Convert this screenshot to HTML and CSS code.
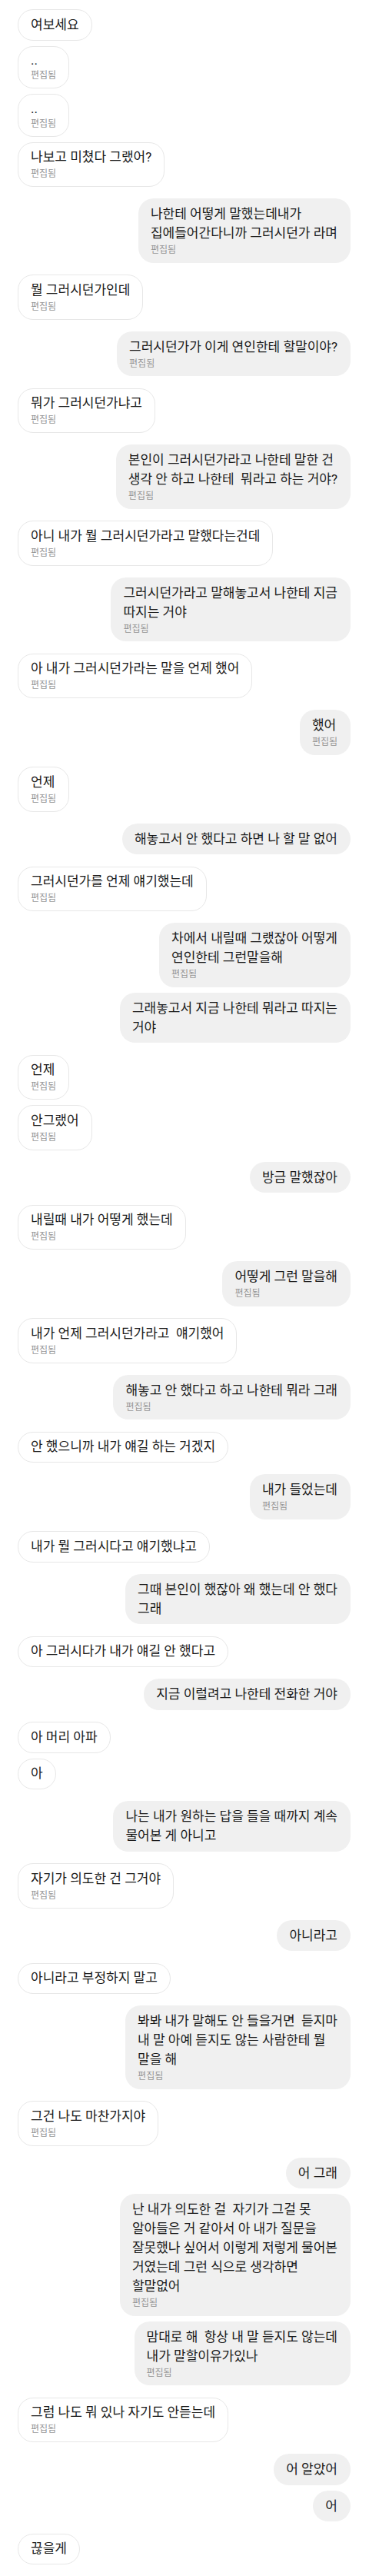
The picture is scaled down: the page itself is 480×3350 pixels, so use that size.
FILE: index.html
```html
<!DOCTYPE html>
<html lang="ko">
<head>
<meta charset="utf-8">
<title>채팅</title>
<link rel="stylesheet" href="styles.css">
</head>
<body>
<main class="chat">
  <div class="msg in"><p class="text">여보세요</p></div>
  <div class="msg in"><p class="text latin">..</p><p class="edited">편집됨</p></div>
  <div class="msg in"><p class="text latin">..</p><p class="edited">편집됨</p></div>
  <div class="msg in"><p class="text">나보고 미쳤다 그랬어?</p><p class="edited">편집됨</p></div>
  <div class="msg out"><p class="text">나한테 어떻게 말했는데내가<br>집에들어간다니까 그러시던가 라며</p><p class="edited">편집됨</p></div>
  <div class="msg in"><p class="text">뭘 그러시던가인데</p><p class="edited">편집됨</p></div>
  <div class="msg out"><p class="text">그러시던가가 이게 연인한테 할말이야?</p><p class="edited">편집됨</p></div>
  <div class="msg in"><p class="text">뭐가 그러시던가냐고</p><p class="edited">편집됨</p></div>
  <div class="msg out"><p class="text">본인이 그러시던가라고 나한테 말한 건<br>생각 안 하고 나한테&nbsp; 뭐라고 하는 거야?</p><p class="edited">편집됨</p></div>
  <div class="msg in"><p class="text">아니 내가 뭘 그러시던가라고 말했다는건데</p><p class="edited">편집됨</p></div>
  <div class="msg out"><p class="text">그러시던가라고 말해놓고서 나한테 지금<br>따지는 거야</p><p class="edited">편집됨</p></div>
  <div class="msg in"><p class="text">아 내가 그러시던가라는 말을 언제 했어</p><p class="edited">편집됨</p></div>
  <div class="msg out"><p class="text">했어</p><p class="edited">편집됨</p></div>
  <div class="msg in"><p class="text">언제</p><p class="edited">편집됨</p></div>
  <div class="msg out"><p class="text">해놓고서 안 했다고 하면 나 할 말 없어</p></div>
  <div class="msg in"><p class="text">그러시던가를 언제 얘기했는데</p><p class="edited">편집됨</p></div>
  <div class="msg out"><p class="text">차에서 내릴때 그랬잖아 어떻게<br>연인한테 그런말을해</p><p class="edited">편집됨</p></div>
  <div class="msg out"><p class="text">그래놓고서 지금 나한테 뭐라고 따지는<br>거야</p></div>
  <div class="msg in"><p class="text">언제</p><p class="edited">편집됨</p></div>
  <div class="msg in"><p class="text">안그랬어</p><p class="edited">편집됨</p></div>
  <div class="msg out"><p class="text">방금 말했잖아</p></div>
  <div class="msg in"><p class="text">내릴때 내가 어떻게 했는데</p><p class="edited">편집됨</p></div>
  <div class="msg out"><p class="text">어떻게 그런 말을해</p><p class="edited">편집됨</p></div>
  <div class="msg in"><p class="text">내가 언제 그러시던가라고&nbsp; 얘기했어</p><p class="edited">편집됨</p></div>
  <div class="msg out"><p class="text">해놓고 안 했다고 하고 나한테 뭐라 그래</p><p class="edited">편집됨</p></div>
  <div class="msg in"><p class="text">안 했으니까 내가 얘길 하는 거겠지</p></div>
  <div class="msg out"><p class="text">내가 들었는데</p><p class="edited">편집됨</p></div>
  <div class="msg in"><p class="text">내가 뭘 그러시다고 얘기했냐고</p></div>
  <div class="msg out"><p class="text">그때 본인이 했잖아 왜 했는데 안 했다<br>그래</p></div>
  <div class="msg in"><p class="text">아 그러시다가 내가 얘길 안 했다고</p></div>
  <div class="msg out"><p class="text">지금 이럴려고 나한테 전화한 거야</p></div>
  <div class="msg in"><p class="text">아 머리 아파</p></div>
  <div class="msg in"><p class="text">아</p></div>
  <div class="msg out"><p class="text">나는 내가 원하는 답을 들을 때까지 계속<br>물어본 게 아니고</p></div>
  <div class="msg in"><p class="text">자기가 의도한 건 그거야</p><p class="edited">편집됨</p></div>
  <div class="msg out"><p class="text">아니라고</p></div>
  <div class="msg in"><p class="text">아니라고 부정하지 말고</p></div>
  <div class="msg out"><p class="text">봐봐 내가 말해도 안 들을거면&nbsp; 듣지마<br>내 말 아예 듣지도 않는 사람한테 뭘<br>말을 해</p><p class="edited">편집됨</p></div>
  <div class="msg in"><p class="text">그건 나도 마찬가지야</p><p class="edited">편집됨</p></div>
  <div class="msg out"><p class="text">어 그래</p></div>
  <div class="msg out"><p class="text">난 내가 의도한 걸&nbsp; 자기가 그걸 못<br>알아들은 거 같아서 아 내가 질문을<br>잘못했나 싶어서 이렇게 저렇게 물어본<br>거였는데 그런 식으로 생각하면<br>할말없어</p><p class="edited">편집됨</p></div>
  <div class="msg out"><p class="text">맘대로 해&nbsp; 항상 내 말 듣지도 않는데<br>내가 말할이유가있나</p><p class="edited">편집됨</p></div>
  <div class="msg in"><p class="text">그럼 나도 뭐 있나 자기도 안듣는데</p><p class="edited">편집됨</p></div>
  <div class="msg out"><p class="text">어 알았어</p></div>
  <div class="msg out"><p class="text">어</p></div>
  <div class="msg in"><p class="text">끊을게</p></div>
</main>
</body>
</html>
```
FILE: styles.css
```css
* {
  box-sizing: border-box;
  margin: 0;
  padding: 0;
}

html,
body {
  background: #ffffff;
}

body {
  margin: 0;
  font-family: Roboto, "Noto Sans CJK KR", sans-serif;
  color: #1a1a1a;
}

.chat {
  display: flex;
  flex-direction: column;
  padding: 12px 24px 15px 23px;
}

.msg {
  border-radius: 20px;
  max-width: 100%;
}

.in {
  align-self: flex-start;
  background: #ffffff;
  border: 1px solid #e7e7e7;
  padding: 6.75px 16px;
}

.out {
  align-self: flex-end;
  background: #f0f0f0;
  padding: 7.75px 17px 7.75px 16px;
}

.in + .in,
.out + .out {
  margin-top: 7px;
}

.in + .out,
.out + .in {
  margin-top: 15.25px;
}

.text {
  font-size: 17px;
  line-height: 25px;
}

.text.latin {
  line-height: 22px;
}

.edited {
  font-size: 12px;
  line-height: 18px;
  color: #969696;
}
```
